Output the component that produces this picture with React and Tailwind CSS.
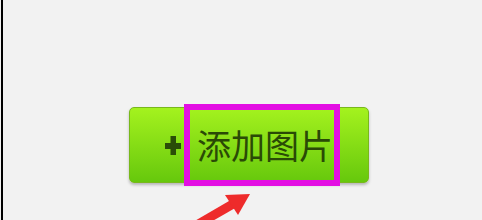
const App = () => {
    return (
        <div className="w-[482px] h-[220px] bg-[#f2f2f2] overflow-hidden" style={{ fontFamily: '"Noto Sans CJK SC", "Liberation Sans", sans-serif' }}>
            <div className="relative ml-[1px] h-full border-l-2 border-black pl-[126px] pt-[107px]">
                {/* green add button */}
                <button className="flex h-[76px] w-[240px] items-center justify-center gap-[16px] rounded-[5px] border border-[#78b81c] bg-gradient-to-b from-[#a4f21e] to-[#66c80c] shadow-[0_2px_3px_rgba(0,0,0,0.25)]">
                    <svg width="16" height="19" viewBox="0 0 16 19">
                        <rect x="0" y="7" width="16" height="6" fill="#2a4d08" />
                        <rect x="5.5" y="0" width="5.5" height="19" fill="#2a4d08" />
                    </svg>
                    <span className="text-[34px] leading-none text-[#2a4a06]">添加图片</span>
                </button>

                {/* annotation box */}
                <div className="absolute left-[181px] top-[104px] h-[82px] w-[156px] border-[6px] border-[#e30fe3]"></div>

                {/* annotation arrow */}
                <svg className="absolute left-[188px] top-[190px]" width="66" height="34" viewBox="0 0 66 34">
                    <line x1="4" y1="36" x2="42" y2="14" stroke="#ee2b2b" strokeWidth="9" />
                    <polygon points="59,4 34,5 47,25" fill="#ee2b2b" />
                </svg>
            </div>
        </div>
    );
};

export default App;
